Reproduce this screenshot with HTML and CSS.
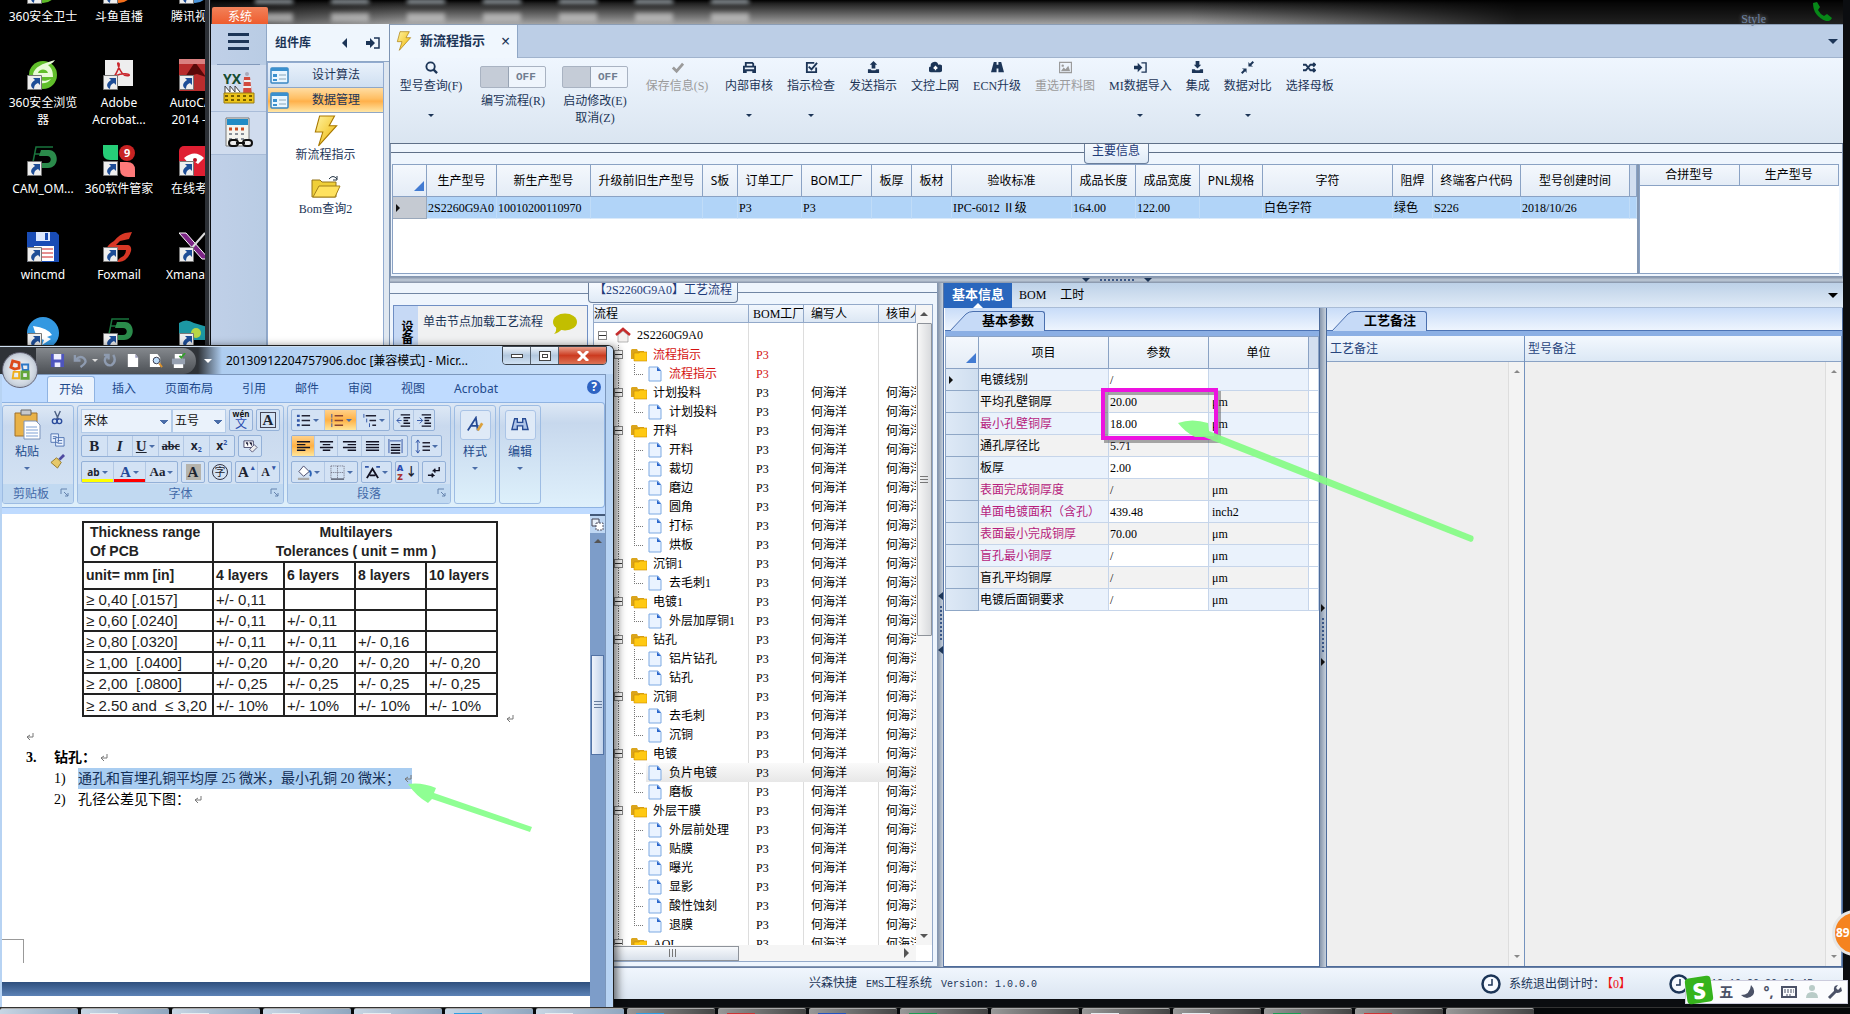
FILE: index.html
```html
<!DOCTYPE html>
<html lang="zh-CN">
<head>
<meta charset="utf-8">
<title>EMS工程系统</title>
<link rel="stylesheet" href="styles.css">
</head>
<body>
<svg class="defs" aria-hidden="true">
  <defs>
    <linearGradient id="gold" x1="0" y1="0" x2="1" y2="1"><stop offset="0" stop-color="#fff3a0"/><stop offset="1" stop-color="#eeb400"/></linearGradient>
    <symbol id="i-shortcut" viewBox="0 0 15 15"><path fill="#eee" stroke="#777" d="M.5.5h14v14H.5z"/><path fill="#1e4d96" d="M6 3h7v7l-2-2c-3 1-4 3-4 6-4-2-4-6 1-9z"/></symbol>
    <symbol id="i-bolt" viewBox="0 0 22 30"><path d="M5 1h14l-5 9h7L4 29l4-13H1z" fill="url(#gold)" stroke="#a87800"/></symbol>
    <symbol id="i-folder" viewBox="0 0 16 14"><path d="M0 2 1 1h5l1 2h6v8H0z" fill="#dba51c"/><path d="M3 5h5l1-1h7v9H3z" fill="#ffc913" stroke="#c98900" stroke-width=".6"/></symbol>
    <symbol id="i-file" viewBox="0 0 14 16"><path d="M1 1h9l3 4v10H1z" fill="#eaf3ff" stroke="#7da9e2"/><path d="M9 1l4 4H9z" fill="#2d68cc"/></symbol>
    <symbol id="i-house" viewBox="0 0 16 16"><path d="M3 8v7h10V8L8 4z" fill="#f3f1f0" stroke="#999" stroke-width=".7"/><path d="M1 8l7-6 7 6" fill="none" stroke="#c52c2c" stroke-width="2.5"/></symbol>
    <symbol id="i-form" viewBox="0 0 19 17"><rect x="1" y="1" width="17" height="15" rx="1" fill="#e9f6ff" stroke="#3a86c2" stroke-width="1.5"/><path fill="#3a90cf" d="M1 1h17v3H1zM3 7h4v3H3zM3 12h4v2H3z"/><path d="M9 8h7M9 12h7" stroke="#8aa6b8"/></symbol>
    <symbol id="i-exit" viewBox="0 0 14 12"><path fill="#1c3557" d="M0 4h4V1l5 5-5 5V8H0z"/><path fill="none" stroke="#1c3557" stroke-width="1.5" d="M8 1h5v10H8"/></symbol>
    <symbol id="i-clock" viewBox="0 0 20 20"><circle cx="10" cy="10" r="8.500" fill="#f6faff" stroke="#1c3557" stroke-width="2.500"/><path d="M11 5v6H7" fill="none" stroke="#1c3557" stroke-width="1.500"/></symbol>
    <symbol id="i-launch" viewBox="0 0 9 9"><path d="M1 6V1h6M4 4l4 4M8 5v3H5" fill="none" stroke="#6583ae"/></symbol>
    <symbol id="i-ret" viewBox="0 0 8 8"><path d="M7 0v4H1M4 2 1 4l3 3" fill="none" stroke="#777"/></symbol>
  </defs>
</svg>
<main class="screen">
 <section class="workspace">
  <ul class="icons">
   <li><svg viewBox="0 0 32 32"><circle cx="16" cy="16" r="14" fill="#5db828"/><use href="#i-shortcut" x="0" y="16" width="15" height="15"/></svg>360安全卫士</li>
   <li><svg viewBox="0 0 32 32"><circle cx="16" cy="16" r="14" fill="#f56f1b"/><use href="#i-shortcut" x="0" y="16" width="15" height="15"/></svg>斗鱼直播</li>
   <li><svg viewBox="0 0 32 32"><circle cx="16" cy="16" r="14" fill="#4a94d8"/><use href="#i-shortcut" x="0" y="16" width="15" height="15"/></svg>腾讯视频</li>
   <li><svg viewBox="0 0 32 32"><circle cx="16" cy="16" r="14" fill="#61bf2b"/><path d="M6 15c2-7 8-10 22-14-2 3-4 4-7 5 4 3 5 7 5 12H10c2 4 8 5 14 2-4 6-16 7-18-5z" fill="#e9fbd8"/><path d="M11 14c1-4 8-5 10 0z" fill="#61bf2b"/><use href="#i-shortcut" x="0" y="16" width="15" height="15"/></svg>360安全浏览器</li>
   <li><svg viewBox="0 0 32 32"><path fill="#eee" d="M2 1h28v26H2z"/><path d="M15 4c4 0-3 15-7 16-4 0 8-6 16-5 6 1-1 4-5-1-3-4-5-10-4-10z" fill="none" stroke="#c9252b" stroke-width="1.500"/><use href="#i-shortcut" x="0" y="16" width="15" height="15"/></svg>Adobe Acrobat...</li>
   <li><svg viewBox="0 0 32 32"><path fill="#b92d2d" d="M0 0h32v32H0z"/><path d="M16 3l11 15-9-3-12 3z" fill="#590909"/><path d="M0 0h32v5H0z" fill="#da8080"/><use href="#i-shortcut" x="0" y="16" width="15" height="15"/></svg>AutoCAD 2014 - ...</li>
   <li><svg viewBox="0 0 32 32"><path d="M6 17 9 2h17M7 9h9" stroke="#19733c" stroke-width="1.500" fill="none"/><path d="M14 5h8c10 0 11 18-1 18h-9v-5h8c5 0 5-7 0-7h-8z" fill="#2b8b4b"/><use href="#i-shortcut" x="0" y="16" width="15" height="15"/></svg>CAM_OM...</li>
   <li><svg viewBox="0 0 32 32"><path fill="#26ce78" d="M0 0h15v15H7q-7 0-7-7z"/><path fill="#ff7a7a" d="M17 17h7q8 0 8 8v7h-7q-8 0-8-8z"/><circle cx="24" cy="8" r="8" fill="#c82323"/><text x="21" y="12" font-size="11" font-weight="700" fill="#fff">9</text><use href="#i-shortcut" x="0" y="16" width="15" height="15"/></svg>360软件管家</li>
   <li><svg viewBox="0 0 32 32"><rect y="1" width="32" height="30" rx="5" fill="#df1f32"/><path d="M5 13q11-9 20 0l-6 6q-5-5-9 0z" fill="#fff"/><circle cx="16" cy="15" r="2" fill="#b01020"/><use href="#i-shortcut" x="0" y="16" width="15" height="15"/></svg>在线考试</li>
   <li><svg viewBox="0 0 32 32"><path d="M0 1h29l3 3v27H0z" fill="#194cb5"/><path fill="#dbe7ff" d="M9 1h14v9H9z"/><path fill="#194cb5" d="M18 2h3v7h-3z"/><path fill="#fff" d="M7 15h20v15H7z"/><path stroke="#ce2020" d="M9 18h17M9 22h17M9 26h17"/><use href="#i-shortcut" x="0" y="16" width="15" height="15"/></svg>wincmd</li>
   <li><svg viewBox="0 0 32 32"><path d="M29 1 26 8l-9 2-4 4h12q4 1 3 6-3 10-12 11h-3l4-4q6-2 6-8H3q1-5 8-9 6-7 11-8z" fill="#d73725"/><use href="#i-shortcut" x="0" y="16" width="15" height="15"/></svg>Foxmail</li>
   <li><svg viewBox="0 0 32 32"><path d="M0 2h7l23 26h-7z" fill="#7c2585" stroke="#fff"/><path d="M26 2 4 27" stroke="#ddd" stroke-width="2"/><use href="#i-shortcut" x="0" y="16" width="15" height="15"/></svg>Xmanager</li>
   <li><svg viewBox="0 0 32 32"><circle cx="16" cy="16" r="16" fill="#3398e1"/><path d="M6 9q15 2 19 9l-5 2 4 2-9 6 2-5-5-2q-3-2-4-6z" fill="#fff"/><use href="#i-shortcut" x="0" y="16" width="15" height="15"/></svg></li>
   <li><svg viewBox="0 0 32 32"><path d="M6 17 9 2h17M7 9h9" stroke="#19733c" stroke-width="1.500" fill="none"/><path d="M14 5h8c10 0 11 18-1 18h-9v-5h8c5 0 5-7 0-7h-8z" fill="#2b8b4b"/><use href="#i-shortcut" x="0" y="16" width="15" height="15"/></svg></li>
   <li><svg viewBox="0 0 32 32"><path d="M0 6q7-5 15 0l17 5v12H0z" fill="#1c97a3"/><circle cx="17" cy="16" r="5" fill="#b9d646"/><use href="#i-shortcut" x="0" y="16" width="15" height="15"/></svg></li>
  </ul>

  <section class="ems">
   <header class="titlebar">
    <div class="ghosts"><i></i><i></i><i></i><i></i><i></i><i></i><i></i></div>
    <button class="systab">系统</button>
    <span class="style-menu">Style</span>
    <svg class="phone" viewBox="0 0 20 19"><path d="M1 1 5 0l3 5-2 3q2 4 6 6l3-2 5 4q-2 4-6 3Q1 14 1 1z" fill="#078718"/></svg>
   </header>
   <div class="body">
    <nav class="rail">
     <button class="burger" aria-label="菜单"><i></i><i></i><i></i></button>
     <button class="railbtn" aria-label="YX"><svg width="32" height="32" viewBox="0 0 32 32"><text x="0" y="12" font-size="14" font-weight="700" fill="#174d31">YX</text><path fill="#d24a3e" d="M21 5h6l2 18h-9z"/><path d="M21 9h7M20 15h8" stroke="#eee" stroke-width="2"/><circle cx="24" cy="2" r="2" fill="#aab"/><path d="M2 21v-7l5 6v-6l5 6v-6l5 6" fill="#fff" stroke="#444"/><path fill="#edc519" stroke="#997a10" d="M1 21h30v10H1z"/><path stroke="#775e00" stroke-dasharray="3 3" stroke-width="2" d="M2 24h29M2 28h29"/></svg></button>
     <button class="railbtn" aria-label="日历"><svg width="30" height="32" viewBox="0 0 30 32"><path fill="#f4f4ee" stroke="#777" d="M2 1h23v28H2z"/><path fill="#218bc5" d="M3 2h21v6H3z"/><path stroke="#c94d22" stroke-dasharray="3 3" stroke-width="3" d="M5 12h18"/><path stroke="#8b9199" stroke-dasharray="3 3" stroke-width="2" d="M5 17h18M5 22h18"/><g fill="#eee" stroke="#111" stroke-width="2"><rect x="5" y="23" width="9" height="6" rx="3"/><rect x="19" y="23" width="9" height="6" rx="3"/><path d="M12 26h9"/></g></svg></button>
    </nav>
    <aside class="library">
     <header><b>组件库</b><span class="tri left"></span><svg width="14" height="12"><use href="#i-exit"/></svg></header>
     <div class="library-list">
      <button class="acc"><svg width="19" height="17"><use href="#i-form"/></svg><span>设计算法</span></button>
      <button class="acc on"><svg width="19" height="17"><use href="#i-form"/></svg><span>数据管理</span></button>
      <a class="tile" href="#"><svg width="24" height="32"><use href="#i-bolt"/></svg>新流程指示</a>
      <a class="tile" href="#"><svg width="30" height="26" viewBox="0 0 30 26"><path d="M1 6h8l2 2h14v15H1z" fill="#efcf39" stroke="#94741b"/><path d="M8 12h21l-5 11H2z" fill="#ffe25f" stroke="#a38019"/><path d="M18 5q4-5 8 0m0-3v4h-4" fill="none" stroke="#234"/></svg>Bom查询2</a>
     </div>
    </aside>

    <section class="document">
     <div class="doctabs"><button class="doctab"><svg width="16" height="20"><use href="#i-bolt"/></svg><b>新流程指示</b><span>×</span></button><span class="tri"></span></div>
     <div class="toolbar">
      <button class="tool wide"><svg viewBox="0 0 14 14"><circle cx="6" cy="6" r="4.500" fill="none" stroke="currentColor" stroke-width="2"/><path d="m9 9 4 4" stroke="currentColor" stroke-width="2.500"/></svg><span>型号查询(F)</span><i></i></button>
      <label class="tool wide switch"><input type="checkbox"><em>OFF</em><span>编写流程(R)</span></label>
      <label class="tool wide switch"><input type="checkbox"><em>OFF</em><span>启动修改(E)<br>取消(Z)</span></label>
      <button class="tool wide off"><svg viewBox="0 0 14 14"><path d="m2 7 4 4 7-8" fill="none" stroke="currentColor" stroke-width="3"/></svg><span>保存信息(S)</span></button>
      <button class="tool"><svg viewBox="0 0 14 14"><path d="M3 6V2h7l1 1v3M1 6h12v6h-2v-2H3v2H1z" fill="none" stroke="currentColor" stroke-width="2"/></svg><span>内部审核</span><i></i></button>
      <button class="tool"><svg viewBox="0 0 14 14"><path d="M12 7v5H2V2h8M4 6l3 3 6-7" fill="none" stroke="currentColor" stroke-width="2"/></svg><span>指示检查</span><i></i></button>
      <button class="tool"><svg viewBox="0 0 14 14"><path d="M7 0l4 4H9v4H5V4H3zM1 9h3l1 1h4l1-1h3v4H1z" fill="currentColor"/></svg><span>发送指示</span></button>
      <button class="tool"><svg viewBox="0 0 14 14"><path d="M3 12a3 3 0 0 1-1-6 4 4 0 0 1 8-2 4 4 0 0 1 2 8z" fill="currentColor"/><path d="M7 10V6M5 8l2-2 2 2" fill="none" stroke="#fff" stroke-width="1.500"/></svg><span>文控上网</span></button>
      <button class="tool"><svg viewBox="0 0 14 14"><path d="M3 1h3v3h2V1h3l3 11H8V8H6v4H0z" fill="currentColor"/></svg><span>ECN升级</span></button>
      <button class="tool off"><svg viewBox="0 0 14 14"><path d="M.5 1.500h13v11H.5z" fill="none" stroke="currentColor" stroke-width="1.500"/><path d="m2 11 3-4 2 2 3-4 2 6z" fill="currentColor"/><circle cx="4" cy="5" r="1.300" fill="currentColor"/></svg><span>重选开料图</span></button>
      <button class="tool"><svg viewBox="0 0 14 12"><use href="#i-exit"/></svg><span>MI数据导入</span><i></i></button>
      <button class="tool"><svg viewBox="0 0 14 14"><path d="M5 0h4v4h2L7 8 3 4h2zM1 9h3l1 1h4l1-1h3v4H1z" fill="currentColor"/></svg><span>集成</span><i></i></button>
      <button class="tool"><svg viewBox="0 0 14 14"><path d="M8 1v5h5l-2-1.500 3-3L12.500 0l-3 3zM6 13V8H1l2 1.500-3 3L1.500 14l3-3z" fill="currentColor"/></svg><span>数据对比</span><i></i></button>
      <button class="tool"><svg viewBox="0 0 14 14"><path d="M0 4h3l5 6h5M0 10h3l5-6h5M11 2l2 2-2 2M11 8l2 2-2 2" fill="none" stroke="currentColor" stroke-width="2"/></svg><span>选择母板</span></button>
     </div>
     <section class="maininfo">
      <h2 class="pill">主要信息</h2>
      <div class="maingrid">
       <div class="gridbox">
       <table class="grid g1">
        <colgroup><col class="w34"><col class="w70"><col class="w94"><col class="w112"><col class="w35"><col class="w64"><col class="w70"><col class="w40"><col class="w40"><col class="w120"><col class="w64"><col class="w64"><col class="w63"><col class="w130"><col class="w40"><col class="w88"><col class="w109"><col></colgroup>
        <thead><tr><th class="corner"></th><th>生产型号</th><th>新生产型号</th><th>升级前旧生产型号</th><th>S板</th><th>订单工厂</th><th>BOM工厂</th><th>板厚</th><th>板材</th><th>验收标准</th><th>成品长度</th><th>成品宽度</th><th>PNL规格</th><th>字符</th><th>阻焊</th><th>终端客户代码</th><th>型号创建时间</th><th class="tail"></th></tr></thead>
        <tbody><tr><td class="mark"><span class="tri right"></span></td><td>2S2260G9A0</td><td>10010200110970</td><td></td><td></td><td>P3</td><td>P3</td><td></td><td></td><td>IPC-6012 Ⅱ级</td><td>164.00</td><td>122.00</td><td></td><td>白色字符</td><td>绿色</td><td>S226</td><td>2018/10/26</td><td></td></tr></tbody>
       </table>
       </div>
       <div class="gridbox side"><table class="grid g2"><thead><tr><th>合拼型号</th><th>生产型号</th></tr></thead></table></div>
      </div>
     </section>
     <div class="hsplit"><span class="tri"></span><u></u><span class="tri"></span></div>
     <div class="lower">
      <section class="hintpane"><div class="hintbox"><b class="vtab">设备</b><p>单击节点加载工艺流程</p><svg width="26" height="22" viewBox="0 0 26 22"><ellipse cx="13" cy="9" rx="12" ry="8.500" fill="#c2be00"/><path d="M4 13q1 5-2 8 5-1 9-6z" fill="#c2be00"/></svg></div></section>
      <section class="treepane">
       <h2 class="pill">【2S2260G9A0】工艺流程</h2>
       <div class="treebox">
        <div class="treeview">
        <table class="tree">
         <colgroup><col class="c1"><col class="c2"><col class="c3"><col></colgroup>
         <thead><tr><th>流程</th><th>BOM工厂</th><th>编写人</th><th>核审人</th></tr></thead>
         <tbody>
          <tr class="root"><td><div><i class="tog"></i><svg><use href="#i-house"/></svg>2S2260G9A0</div></td><td></td><td></td><td></td></tr>
          <tr class="l1 red"><td><div><i class="tog"></i><svg><use href="#i-folder"/></svg>流程指示</div></td><td>P3</td><td></td><td></td></tr>
          <tr class="l2 last red"><td><div><i class="twig"></i><svg><use href="#i-file"/></svg>流程指示</div></td><td>P3</td><td></td><td></td></tr>
          <tr class="l1"><td><div><i class="tog"></i><svg><use href="#i-folder"/></svg>计划投料</div></td><td>P3</td><td>何海洋</td><td>何海洋</td></tr>
          <tr class="l2 last"><td><div><i class="twig"></i><svg><use href="#i-file"/></svg>计划投料</div></td><td>P3</td><td>何海洋</td><td>何海洋</td></tr>
          <tr class="l1"><td><div><i class="tog"></i><svg><use href="#i-folder"/></svg>开料</div></td><td>P3</td><td>何海洋</td><td>何海洋</td></tr>
          <tr class="l2"><td><div><i class="twig"></i><svg><use href="#i-file"/></svg>开料</div></td><td>P3</td><td>何海洋</td><td>何海洋</td></tr>
          <tr class="l2"><td><div><i class="twig"></i><svg><use href="#i-file"/></svg>裁切</div></td><td>P3</td><td>何海洋</td><td>何海洋</td></tr>
          <tr class="l2"><td><div><i class="twig"></i><svg><use href="#i-file"/></svg>磨边</div></td><td>P3</td><td>何海洋</td><td>何海洋</td></tr>
          <tr class="l2"><td><div><i class="twig"></i><svg><use href="#i-file"/></svg>圆角</div></td><td>P3</td><td>何海洋</td><td>何海洋</td></tr>
          <tr class="l2"><td><div><i class="twig"></i><svg><use href="#i-file"/></svg>打标</div></td><td>P3</td><td>何海洋</td><td>何海洋</td></tr>
          <tr class="l2 last"><td><div><i class="twig"></i><svg><use href="#i-file"/></svg>烘板</div></td><td>P3</td><td>何海洋</td><td>何海洋</td></tr>
          <tr class="l1"><td><div><i class="tog"></i><svg><use href="#i-folder"/></svg>沉铜1</div></td><td>P3</td><td>何海洋</td><td>何海洋</td></tr>
          <tr class="l2 last"><td><div><i class="twig"></i><svg><use href="#i-file"/></svg>去毛刺1</div></td><td>P3</td><td>何海洋</td><td>何海洋</td></tr>
          <tr class="l1"><td><div><i class="tog"></i><svg><use href="#i-folder"/></svg>电镀1</div></td><td>P3</td><td>何海洋</td><td>何海洋</td></tr>
          <tr class="l2 last"><td><div><i class="twig"></i><svg><use href="#i-file"/></svg>外层加厚铜1</div></td><td>P3</td><td>何海洋</td><td>何海洋</td></tr>
          <tr class="l1"><td><div><i class="tog"></i><svg><use href="#i-folder"/></svg>钻孔</div></td><td>P3</td><td>何海洋</td><td>何海洋</td></tr>
          <tr class="l2"><td><div><i class="twig"></i><svg><use href="#i-file"/></svg>铝片钻孔</div></td><td>P3</td><td>何海洋</td><td>何海洋</td></tr>
          <tr class="l2 last"><td><div><i class="twig"></i><svg><use href="#i-file"/></svg>钻孔</div></td><td>P3</td><td>何海洋</td><td>何海洋</td></tr>
          <tr class="l1"><td><div><i class="tog"></i><svg><use href="#i-folder"/></svg>沉铜</div></td><td>P3</td><td>何海洋</td><td>何海洋</td></tr>
          <tr class="l2"><td><div><i class="twig"></i><svg><use href="#i-file"/></svg>去毛刺</div></td><td>P3</td><td>何海洋</td><td>何海洋</td></tr>
          <tr class="l2 last"><td><div><i class="twig"></i><svg><use href="#i-file"/></svg>沉铜</div></td><td>P3</td><td>何海洋</td><td>何海洋</td></tr>
          <tr class="l1"><td><div><i class="tog"></i><svg><use href="#i-folder"/></svg>电镀</div></td><td>P3</td><td>何海洋</td><td>何海洋</td></tr>
          <tr class="l2 sel"><td><div><i class="twig"></i><svg><use href="#i-file"/></svg>负片电镀</div></td><td>P3</td><td>何海洋</td><td>何海洋</td></tr>
          <tr class="l2 last"><td><div><i class="twig"></i><svg><use href="#i-file"/></svg>磨板</div></td><td>P3</td><td>何海洋</td><td>何海洋</td></tr>
          <tr class="l1"><td><div><i class="tog"></i><svg><use href="#i-folder"/></svg>外层干膜</div></td><td>P3</td><td>何海洋</td><td>何海洋</td></tr>
          <tr class="l2"><td><div><i class="twig"></i><svg><use href="#i-file"/></svg>外层前处理</div></td><td>P3</td><td>何海洋</td><td>何海洋</td></tr>
          <tr class="l2"><td><div><i class="twig"></i><svg><use href="#i-file"/></svg>贴膜</div></td><td>P3</td><td>何海洋</td><td>何海洋</td></tr>
          <tr class="l2"><td><div><i class="twig"></i><svg><use href="#i-file"/></svg>曝光</div></td><td>P3</td><td>何海洋</td><td>何海洋</td></tr>
          <tr class="l2"><td><div><i class="twig"></i><svg><use href="#i-file"/></svg>显影</div></td><td>P3</td><td>何海洋</td><td>何海洋</td></tr>
          <tr class="l2"><td><div><i class="twig"></i><svg><use href="#i-file"/></svg>酸性蚀刻</div></td><td>P3</td><td>何海洋</td><td>何海洋</td></tr>
          <tr class="l2 last"><td><div><i class="twig"></i><svg><use href="#i-file"/></svg>退膜</div></td><td>P3</td><td>何海洋</td><td>何海洋</td></tr>
          <tr class="l1"><td><div><i class="tog"></i><svg><use href="#i-folder"/></svg>AOI</div></td><td>P3</td><td>何海洋</td><td>何海洋</td></tr>
         </tbody>
        </table>
        </div>
        <div class="vscroll"><span class="tri up"></span><i class="thumb"></i><span class="tri"></span></div>
        <div class="hscroll"><i class="thumb"></i><span class="tri right"></span></div>
       </div>
      </section>
      <div class="vsplit"><span class="tri left"></span><u></u><span class="tri left"></span></div>
      <section class="params">
       <div class="tabs"><button class="on">基本信息</button><button>BOM</button><button>工时</button><span class="tri"></span></div>
       <div class="panes">
        <div class="pane p1">
         <div class="subtab"><svg viewBox="0 0 32 20" preserveAspectRatio="none"><path d="M0 20 16 3q3-2.500 7-2.500h9V20z" fill="#c6daf7"/><path d="M0 20 16 3q3-2.500 7-2.500h9" fill="none" stroke="#4a6fae"/></svg><b>基本参数</b></div>
         <table class="grid g3">
          <colgroup><col class="w33"><col class="w130"><col class="w100"><col class="w100"><col></colgroup>
          <thead><tr><th class="corner"></th><th>项目</th><th>参数</th><th>单位</th><th class="tail"></th></tr></thead>
          <tbody>
          <tr><td><span class="tri right"></span></td><td>电镀线别</td><td>/</td><td></td><td></td></tr>
          <tr><td></td><td>平均孔壁铜厚</td><td>20.00</td><td>μm</td><td></td></tr>
          <tr class="key"><td></td><td>最小孔壁铜厚</td><td>18.00</td><td>μm</td><td></td></tr>
          <tr><td></td><td>通孔厚径比</td><td>5.71</td><td></td><td></td></tr>
          <tr><td></td><td>板厚</td><td>2.00</td><td></td><td></td></tr>
          <tr class="key"><td></td><td>表面完成铜厚度</td><td>/</td><td>μm</td><td></td></tr>
          <tr class="key"><td></td><td>单面电镀面积（含孔）</td><td>439.48</td><td>inch2</td><td></td></tr>
          <tr class="key"><td></td><td>表面最小完成铜厚</td><td>70.00</td><td>μm</td><td></td></tr>
          <tr class="key"><td></td><td>盲孔最小铜厚</td><td>/</td><td>μm</td><td></td></tr>
          <tr><td></td><td>盲孔平均铜厚</td><td>/</td><td>μm</td><td></td></tr>
          <tr><td></td><td>电镀后面铜要求</td><td>/</td><td>μm</td><td></td></tr>
          </tbody>
         </table>
        </div>
        <div class="vsplit thin"><span class="tri right"></span><u></u><span class="tri right"></span></div>
        <div class="pane p2">
         <div class="subtab"><svg viewBox="0 0 32 20" preserveAspectRatio="none"><path d="M0 20 16 3q3-2.500 7-2.500h9V20z" fill="#c6daf7"/><path d="M0 20 16 3q3-2.500 7-2.500h9" fill="none" stroke="#4a6fae"/></svg><b>工艺备注</b></div>
         <div class="notes">
          <div><h3>工艺备注</h3><div class="notebody"><span class="tri up"></span><span class="tri"></span></div></div>
          <div><h3>型号备注</h3><div class="notebody"><span class="tri up"></span><span class="tri"></span></div></div>
         </div>
        </div>
       </div>
      </section>
     </div>
    </section>
   </div>
   <footer class="status"><span class="ver">兴森快捷 <span class="mono">&nbsp;EMS</span>工程系统 <span class="mono">&nbsp;Version: 1.0.0.0</span></span><span class="count"><svg width="20" height="20"><use href="#i-clock"/></svg>系统退出倒计时：<em>【0】</em></span><span class="now"><svg width="20" height="20"><use href="#i-clock"/></svg><span class="mono">2018-10-29 20:20:45</span></span></footer>
  </section>

  <section class="word">
   <header class="wtitle">
    <button class="orb" aria-label="Office"><svg viewBox="0 0 24 24" fill="none" stroke-width="3"><path d="M11 4 4 2 2 9l4 2 5-1z" stroke="#dc4a1a"/><path d="M14 6h7v6h-6z" stroke="#2e78c6" stroke-width="2"/><path d="M5 14h6v7H4z" stroke="#efaf1d" stroke-width="2"/><path d="M14 14h7v7h-7z" stroke="#64a63a"/></svg></button>
    <div class="qat">
     <svg viewBox="0 0 16 16"><path d="M1 1h14v14H1z" fill="#4e55bd"/><path d="M4 1h8v6H4zM5 10h6v5H5z" fill="#eef"/></svg>
     <svg viewBox="0 0 16 16"><path d="M2 2v6h6M3 7q5-5 9-1t-4 9" fill="none" stroke="#8e9bb0" stroke-width="2.500"/></svg>
     <span class="tri"></span>
     <svg viewBox="0 0 16 16"><path d="M12 2q4 7-2 11-6 1-7-5 0-3 3-5m-4-1h5v5" fill="none" stroke="#8e9bb0" stroke-width="2.500"/></svg>
     <svg viewBox="0 0 16 16"><path d="M3 1h8l3 4v10H3z" fill="#fff"/><path d="M11 1v4h3z" fill="#99b"/></svg>
     <svg viewBox="0 0 16 16"><path d="M2 1h8l3 4v10H2z" fill="#fff"/><circle cx="9" cy="8" r="3.500" fill="#bcdcfa" stroke="#334"/><path d="m12 11 3 4" stroke="#dc922b" stroke-width="2"/></svg>
     <svg viewBox="0 0 16 16"><path fill="#fff" d="M4 1h8v5H4zM3 11h10v5H3z"/><path fill="#97a1b1" d="M1 6h14v6H1z"/><path d="m9 3 2 2 4-5" fill="none" stroke="#35a02c" stroke-width="2"/></svg>
    </div>
    <span class="tri qmore"></span>
    <h1>20130912204757906.doc [兼容模式] - Micr...</h1>
    <div class="winbtns"><button aria-label="最小化"><i class="min"></i></button><button aria-label="最大化"><i class="max"></i></button><button class="close" aria-label="关闭"><svg width="12" height="10" viewBox="0 0 12 10"><path d="m1 0 10 10M11 0 1 10" stroke="#fff" stroke-width="3"/></svg></button></div>
   </header>
   <div class="wbody">
    <nav class="wtabs"><button class="on">开始</button><button>插入</button><button>页面布局</button><button>引用</button><button>邮件</button><button>审阅</button><button>视图</button><button>Acrobat</button><span class="help">?</span></nav>
    <div class="ribbon">
     <section class="grp clip"><div class="grpbody"><button class="paste"><svg width="27" height="31" viewBox="0 0 27 31"><path fill="#e9b248" stroke="#a17028" d="M1 4h22v23H1z"/><path fill="#c7c9cc" stroke="#666" d="M7 1h10v5H7z"/><path fill="#fff" stroke="#7d94bb" d="M10 12h12l4 4v14H10z"/><path stroke="#7ea1d5" d="M12 18h11M12 21h12M12 24h12M12 27h12"/></svg>粘贴<span class="tri"></span></button><div class="minis">
      <svg viewBox="0 0 16 16"><path d="m5 1 4 9M11 1 7 10" stroke="#4d6185" stroke-width="1.500"/><circle cx="5" cy="12" r="2.500" fill="none" stroke="#2b4c9c" stroke-width="1.500"/><circle cx="10" cy="12" r="2.500" fill="none" stroke="#2b4c9c" stroke-width="1.500"/></svg>
      <svg viewBox="0 0 16 16" fill="#e9f2ff" stroke="#4e71b0"><path d="M1 2h8v9H1zM6 6h9v9H6z"/><path d="M3 5h4M3 7h3M8 9h5M8 12h5"/></svg>
      <svg viewBox="0 0 16 16"><path d="m15 1-5 5" stroke="#4e4aa0" stroke-width="3"/><path d="m7 4 5 5-4 6-7-6z" fill="#e6c869" stroke="#947a2c"/></svg></div></div><h4>剪贴板<svg width="9" height="9"><use href="#i-launch"/></svg></h4></section>
     <section class="grp font"><div class="grpbody rows">
      <div class="row"><select class="family" aria-label="字体"><option>宋体</option></select><select class="size" aria-label="字号"><option>五号</option></select><button class="rb lone ruby"><small>wén</small>文</button><button class="rb lone serif"><span class="boxed">A</span></button></div>
      <div class="row"><span class="bar f2"><button class="rb serif">B</button><button class="rb serif it">I</button><button class="rb serif ul">U<span class="tri"></span></button><button class="rb serif st">abc</button><button class="rb script">x<sub>2</sub></button><button class="rb script">x<sup>2</sup></button></span><button class="rb lone"><svg viewBox="0 0 16 16"><path d="M1 2h10v7H1z" fill="#fff" stroke="#446"/><path d="m7 11 5-5 3 3-5 5z" fill="#eee" stroke="#557"/><path d="M3 4h2v3M7 4h2v3" stroke="#224"/></svg></button></div>
      <div class="row"><span class="bar f3"><button class="rb hl">ab<span class="tri"></span></button><button class="rb serif fc">A<span class="tri"></span></button><button class="rb serif aa">Aa<span class="tri"></span></button></span><button class="rb lone serif"><span class="shade">A</span></button><button class="rb lone"><span class="ring">字</span></button><span class="bar grow"><button class="rb serif">A<sup>▴</sup></button><button class="rb serif sm">A<sup>▾</sup></button></span></div>
     </div><h4>字体<svg width="9" height="9"><use href="#i-launch"/></svg></h4></section>
     <section class="grp para"><div class="grpbody rows">
      <div class="row"><span class="bar p3"><button class="rb"><svg viewBox="0 0 16 16"><path stroke="#223" stroke-width="1.500" d="M6 3h9M6 8h9M6 13h9"/><path stroke="#3154a5" stroke-width="2.500" d="M1 3h3M1 8h3M1 13h3"/></svg><span class="tri"></span></button><button class="rb hot"><svg viewBox="0 0 16 16"><path stroke="#843" stroke-width="1.500" d="M6 3h9M6 8h9M6 13h9"/><path stroke="#3154a5" d="M3 1v4M3 6v4M3 11v4"/></svg><span class="tri"></span></button><button class="rb"><svg viewBox="0 0 16 16"><path stroke="#223" stroke-width="1.500" d="M4 3h11M8 8h7M11 13h4"/><path stroke="#3154a5" d="M2 1v4M5 6v4M8 11v4"/></svg><span class="tri"></span></button></span><span class="bar"><button class="rb"><svg viewBox="0 0 16 16"><path stroke="#112" stroke-width="1.500" d="M5 2h10M8 5h7M8 8h5M8 11h7M5 14h10"/><path d="M6 8H1l3-3M1 8l3 3" fill="none" stroke="#3154a5"/></svg></button><button class="rb"><svg viewBox="0 0 16 16"><path stroke="#112" stroke-width="1.500" d="M5 2h10M8 5h7M8 8h5M8 11h7M5 14h10"/><path d="M0 8h6L3 5m3 3-3 3" fill="none" stroke="#3154a5"/></svg></button></span></div>
      <div class="row"><span class="bar p5"><button class="rb hot"><svg viewBox="0 0 16 16"><path stroke="#112" stroke-width="1.500" d="M1 3h14M1 6h9M1 9h14M1 12h9"/></svg></button><button class="rb"><svg viewBox="0 0 16 16"><path stroke="#112" stroke-width="1.500" d="M1 3h14M4 6h8M1 9h14M4 12h8"/></svg></button><button class="rb"><svg viewBox="0 0 16 16"><path stroke="#112" stroke-width="1.500" d="M1 3h14M6 6h9M1 9h14M6 12h9"/></svg></button><button class="rb"><svg viewBox="0 0 16 16"><path stroke="#112" stroke-width="1.500" d="M1 3h14M1 6h14M1 9h14M1 12h14"/></svg></button><button class="rb"><svg viewBox="0 0 16 16"><path stroke="#112" stroke-width="1.500" d="M3 6h10M3 9h10M3 12h10M3 15h10"/><path d="M1 0v15M15 0v15M2 2h12" stroke="#3154a5"/></svg></button></span><button class="rb lone w32"><svg viewBox="0 0 16 16"><path stroke="#223" stroke-width="1.500" d="M8 4h8M8 8h8M8 12h8"/><path d="M3 1v14M1 4l2-3 2 3M1 12l2 3 2-3" fill="none" stroke="#3154a5"/></svg><span class="tri"></span></button></div>
      <div class="row"><span class="bar p2b"><button class="rb"><svg viewBox="0 0 16 16"><path d="m7 1 6 6-6 5-5-5z" fill="#fff" stroke="#446"/><path d="M13 6q3 2 1 6" stroke="#2a62b5" stroke-width="2" fill="none"/><path stroke="#aaa" stroke-width="3" d="M1 15h12"/></svg><span class="tri"></span></button><button class="rb"><svg viewBox="0 0 16 16"><path d="M1 1h14v14M1 1v14M8 1v14M1 8h14" fill="none" stroke="#667" stroke-dasharray="1 1"/><path d="M1 15h14" stroke="#112"/></svg><span class="tri"></span></button></span><button class="rb lone w32"><svg viewBox="0 0 16 16"><path d="m2 14 6-10 6 10M5 11h6" fill="none" stroke="#112" stroke-width="2"/><path d="M0 2h4M12 2h4" stroke="#3154a5" stroke-width="2"/></svg><span class="tri"></span></button><button class="rb lone sort"><b>A<br><i>Z</i></b>↓</button><button class="rb lone"><svg viewBox="0 0 16 16"><path d="M13 2v4H7l2-2M7 6l2 2M1 11h6l-2-2m2 2-2 2" fill="none" stroke="#112" stroke-width="1.500"/></svg></button></div>
     </div><h4>段落<svg width="9" height="9"><use href="#i-launch"/></svg></h4></section>
     <section class="grp tall"><button><span class="big"><svg viewBox="0 0 20 20"><path d="m2 16 9-14 2 14M5 11h9" fill="none" stroke="#274b94" stroke-width="2"/><path d="m18 8-5 8" stroke="#dba13d" stroke-width="3"/></svg></span>样式<span class="tri"></span></button></section>
     <section class="grp tall"><button><span class="big"><svg viewBox="0 0 20 20"><path d="M4 3h3v4h6V3h3l3 12h-6v-4H7v4H1z" fill="#afc5e8" stroke="#274b94" stroke-width="1.500"/></svg></span>编辑<span class="tri"></span></button></section>
    </div>
    <div class="docarea">
     <div class="pages">
      <article class="page">
       <div class="figure"><table class="pcb">
        <colgroup><col class="k"><col><col><col><col></colgroup>
        <tr class="h"><th>&nbsp;Thickness range<br>&nbsp;Of PCB</th><th colspan="4" class="mid">Multilayers<br>Tolerances ( unit = mm )</th></tr>
        <tr class="h2"><th>unit= mm [in]</th><th>4 layers</th><th>6 layers</th><th>8 layers</th><th>10 layers</th></tr>
        <tr><td>≥ 0,40 [.0157]</td><td>+/- 0,11</td><td></td><td></td><td></td></tr>
        <tr><td>≥ 0,60 [.0240]</td><td>+/- 0,11</td><td>+/- 0,11</td><td></td><td></td></tr>
        <tr><td>≥ 0,80 [.0320]</td><td>+/- 0,11</td><td>+/- 0,11</td><td>+/- 0,16</td><td></td></tr>
        <tr><td>≥ 1,00  [.0400]</td><td>+/- 0,20</td><td>+/- 0,20</td><td>+/- 0,20</td><td>+/- 0,20</td></tr>
        <tr><td>≥ 2,00  [.0800]</td><td>+/- 0,25</td><td>+/- 0,25</td><td>+/- 0,25</td><td>+/- 0,25</td></tr>
        <tr class="end"><td>≥ 2.50 and  ≤ 3,20</td><td>+/- 10%</td><td>+/- 10%</td><td>+/- 10%</td><td>+/- 10%</td></tr>
       </table><svg class="ret" width="8" height="8"><use href="#i-ret"/></svg></div>
       <p class="blank"><svg width="8" height="8"><use href="#i-ret"/></svg></p>
       <p class="sec"><span>3.</span>钻孔：<svg width="8" height="8"><use href="#i-ret"/></svg></p>
       <p class="item"><span>1)</span><mark>通孔和盲埋孔铜平均厚 25 微米，最小孔铜 20 微米；<svg width="8" height="8"><use href="#i-ret"/></svg></mark></p>
       <p class="item"><span>2)</span>孔径公差见下图：<svg width="8" height="8"><use href="#i-ret"/></svg></p>
       <i class="crop"></i>
      </article>
      <div class="pagegap"></div>
      <div class="nextpage"></div>
     </div>
     <div class="wscroll"><div class="ruler"><svg width="13" height="13" viewBox="0 0 13 13"><path d="M1 1h7v7H1z" fill="#e9f1fb" stroke="#445"/><path d="M5 5h7v7H5z" fill="#fff" stroke="#556" stroke-dasharray="2 1"/></svg></div><div class="track"><span class="tri up"></span><i class="thumb"></i></div></div>
    </div>
   </div>
  </section>

  <svg class="marks" width="1480" height="850" aria-hidden="true">
   <rect x="1106" y="393" width="113" height="48" fill="none" stroke="#555" stroke-opacity=".5" stroke-width="4"/>
   <rect x="1103" y="390" width="113" height="48" fill="none" stroke="#ed12e0" stroke-width="4"/>
   <path d="M408 784q14-2 28 4l-2 5 98 34-2 5-98-33-4 4q-12-7-20-19z" fill="#8fff93"/>
   <path d="M1178 423q14-5 30 0l1 8 264 105q2 4-2 6l-267-105-9 0q-10-5-17-14z" fill="#84fc84" fill-opacity=".92"/>
  </svg>
  <div class="ball">89</div>
  <div class="ime"><b class="sogou">S</b><span>五</span>
   <svg viewBox="0 0 16 16"><path d="M11 1q-1 10-10 10 6 6 12 0 3-5-2-10z" fill="#4b5267"/></svg>
   <span>°,</span>
   <svg viewBox="0 0 16 16"><path d="M1 3h14v10H1z" fill="none" stroke="#4b5267" stroke-width="2"/><path d="M3 6h10M3 8h10M5 11h6" stroke="#4b5267" stroke-dasharray="2 1"/></svg>
   <svg viewBox="0 0 16 16"><circle cx="8" cy="4" r="3" fill="#b9ccc8"/><path d="M2 14q0-6 6-6t6 6z" fill="#b9ccc8"/></svg>
   <svg viewBox="0 0 16 16"><path d="m2 14 7-7" stroke="#4b5267" stroke-width="3"/><path d="M14 3l-3 3-2-2 2-3q-5 0-4 6 3 4 8 0z" fill="#4b5267"/></svg></div>
 </section>
 <footer class="taskbar"><i class="lt"></i><i class="lt g"></i><i class="lt g"></i><i class="lt g"></i><i class="lt g"></i><i class="lt c"></i><i class="lt g"></i><i class="c"></i><i class="r"></i><i class="b"></i><i class="gr"></i><i></i><i class="g"></i><i class="g"></i><i class="gr"></i><i class="r"></i><i></i></footer>
</main>
</body>
</html>
```
FILE: styles.css
```css
*{box-sizing:border-box}
body{margin:0;background:#000;overflow:hidden;font:12px/16px "Liberation Serif","Noto Sans CJK SC",serif;color:#000}
button,select{font:inherit;color:inherit;background:none;border:0;padding:0;margin:0}
h1,h2,h3,h4,p,ul{margin:0;padding:0;font-weight:400;font-size:12px}
ul{list-style:none}
em,i{font-style:normal}
svg{flex:none}
svg text{font-family:"Noto Sans",sans-serif}
.defs{position:absolute;width:0;height:0}
.mono{font-family:"Liberation Mono",monospace;font-size:10px}
.tri{width:0;height:0;flex:none;border:4px solid transparent;border-top-color:#1c3557;border-bottom:0}
.tri.up{border:4px solid transparent;border-bottom-color:#555;border-top:0}
.tri.left{border:5px solid transparent;border-right-color:#1c3557;border-left:0}
.tri.right{border:5px solid transparent;border-left-color:#111;border-right:0}
.screen{display:grid;grid-template-rows:1fr 7px;height:100vh}
.workspace{position:relative;overflow:hidden;min-height:0}

/* desktop shortcuts */
.icons{display:grid;grid-template-columns:repeat(3,76px);grid-auto-rows:86px;margin:-27px 0 0 5px}
.icons li{display:flex;flex-direction:column;align-items:center;padding:0 2px;text-align:center;color:#fff;font:12px/17px "Noto Sans","Noto Sans CJK SC",sans-serif;gap:3px}
.icons svg{width:32px;height:32px}

/* main application window */
.ems{position:absolute;inset:0 0 0 205px;display:grid;grid-template-rows:24px 1fr 32px 8px;background:#0b0d10;border-left:4px solid #2c3036;box-shadow:inset 1px 0 #8b9096;padding:0 7px 0 2px}
.titlebar{position:relative;display:flex;align-items:flex-end;background:linear-gradient(90deg,#0009,transparent 12%,transparent 60%,#000c 80%),linear-gradient(#000,#222 15%,#a2a2a2)}
.systab{width:56px;height:17px;background:linear-gradient(#f2825a,#ee5c2e);color:#fff;border-radius:2px 2px 0 0;margin-left:1px;position:relative;line-height:20px;overflow:hidden}
.ghosts{position:absolute;left:44px;top:0;display:flex;gap:38px;filter:blur(2px)}
.ghosts i{width:38px;height:22px;border-top:3px solid #c6d2da;border-bottom:9px solid #ccca}
.style-menu{margin-left:auto;color:#6e84a5;text-shadow:0 0 4px #999;margin-right:46px;line-height:10px}
.phone{width:20px;height:19px;margin:0 11px 3px 0}
.body{display:grid;grid-template-columns:56px 122px 1fr;min-height:0;background:#eef5fc}
.rail{background:linear-gradient(90deg,#c0d0e8,#b9cce4);border-right:1px solid #8fa7c6;display:flex;flex-direction:column}
.burger{height:41px;width:43px;margin-left:6px;border-bottom:1px solid #8299ba;display:flex;flex-direction:column;align-items:center;gap:4px;padding-top:9px}
.burger i{width:21px;height:3px;background:#1c3557}
.railbtn{height:47px;background:#d0dcee;border-bottom:1px solid #a9bcd8;display:grid;place-items:center}
.railbtn+.railbtn{height:43px}
.library{display:flex;flex-direction:column;background:#dfe7f0}
.library header{display:flex;align-items:center;height:38px;padding:0 9px 0 8px;background:#eff6fd;border-bottom:1px solid #8fa7c6;color:#1c3557}
.library header b{font-weight:700;flex:1}
.library header svg{margin-left:19px}
.library-list{flex:1;margin-right:5px;background:#fff;border:1px solid #92abd0;border-bottom:0;display:flex;flex-direction:column}
.acc{height:25px;display:flex;align-items:center;padding-left:2px;background:linear-gradient(#e9f1fb,#cfdff1);color:#1c3557;border-bottom:1px solid #8fa7c6}
.acc span{flex:1}
.acc.on{background:linear-gradient(#ffdda3,#ffbe62 45%,#ffb04a 55%,#ffe6a5)}
.tile{color:#1c3557;text-decoration:none;display:flex;flex-direction:column;align-items:center;padding-top:2px;height:58px}
.tile+.tile{gap:1px;padding-top:3px}

.document{display:grid;grid-template-rows:34px 86px 133px 6px 1fr;min-width:0;min-height:0;border-left:1px solid #7c93b2}
.doctabs{display:flex;align-items:center;justify-content:space-between;background:#bccee6;border-bottom:1px solid #a0b3cd;padding-right:5px;border-top:1px solid #8b9db5}
.doctabs>.tri{border-width:5px;border-bottom:0}
.doctab{width:128px;height:33px;display:flex;align-items:center;gap:8px;background:#f0f7fe;border-right:1px solid #8fa7c6;color:#1c3557;padding-left:6px}
.doctab b{font-size:13px}
.doctab span{margin-left:8px;font:16px/16px "Noto Sans",sans-serif}
.toolbar{display:flex;gap:14px;align-items:flex-start;padding:3px 0 0 7px;background:linear-gradient(#eff6fe,#dae5f1);border-bottom:1px solid #5f7088;color:#1c3557}
.tool{display:flex;flex-direction:column;align-items:center;flex:none;white-space:nowrap}
.tool svg{width:13px;height:13px;margin-bottom:4px}
.tool i{border:3px solid transparent;border-top-color:#1c3557;border-bottom:0;margin-top:20px}
.tool.wide{width:68px}
.tool.off{color:#9b9b9b}
.switch{padding-top:5px;text-align:center}
.switch input{position:absolute;opacity:0}
.switch em{width:66px;height:22px;border:1px solid #a9b3c2;border-radius:2px;background:linear-gradient(90deg,#c5ccd7 27px,#97a3b3 27px 28px,#eff5fc 28px);font:700 11px/20px "Liberation Mono",monospace;text-align:left;padding-left:35px;color:#707d90;margin-bottom:5px}
.switch span{line-height:17px}
.maininfo{position:relative;border:1px solid #8497b2;border-top:0;background:linear-gradient(#eef5fd 8px,#5f7088 8px 9px,#eef5fd 9px);padding:20px 3px 3px 1px}
.pill{border:1px solid #6b7f9c;border-top:0;border-radius:0 0 4px 4px;background:linear-gradient(#f6faff,#dfeaf6);color:#1f3b78;text-align:center;white-space:nowrap}
.maininfo .pill{position:absolute;left:50%;top:0;width:65px;height:20px;margin-left:-33px;line-height:14px}
.maingrid{display:grid;grid-template-columns:1fr 200px;gap:2px;background:#8497b2;height:110px}
.gridbox{background:#fff;border:1px solid #8aa2c4;border-right:0}
.grid{width:100%;table-layout:fixed;border-collapse:separate;border-spacing:0;white-space:nowrap}
.grid th,.grid td{padding:0;overflow:hidden}
.grid th{font:12px/16px "Noto Sans","Noto Sans CJK SC",sans-serif;background:linear-gradient(#f4f8fd,#e4ecf6);border-right:1px solid #8aa2c4;border-bottom:1px solid #8aa2c4}
.grid th.tail{background:#d3dff0}
.corner::after{content:"";float:right;margin:11px 2px 0 0;border:5px solid transparent;border-right-color:#427bd2;border-bottom-color:#427bd2}
.g1 th,.g3 th{height:32px}
.g2 th{height:21px}
.g1 td{background:#b1d4f8;height:22px;border-right:1px solid #c0dcf8;padding-left:1px;border-bottom:1px solid #dbeafa}
.g1 td.mark{background:#c5cad2;border-color:#9aa8bb}
.g1 td .tri,.g3 td .tri{display:block;margin-left:2px;border-top-width:4px;border-bottom-width:4px;border-left-width:4px}
.w33{width:33px}.w34{width:34px}.w35{width:35px}.w40{width:40px}.w63{width:63px}.w64{width:64px}.w70{width:70px}.w88{width:88px}.w94{width:94px}.w100{width:100px}.w109{width:109px}.w112{width:112px}.w120{width:120px}.w130{width:130px}
.hsplit{display:flex;align-items:center;justify-content:center;gap:10px;background:linear-gradient(#8492a8,#c0cbd8,#8492a8)}
.hsplit u{width:34px;border-top:2px dotted #3b5786}

.lower{display:grid;grid-template-columns:198px 350px 5px 1fr;min-height:0;background:#e9f2fb}
.hintpane{background:linear-gradient(#eef5fd 10px,#7186a4 10px 11px,#eef5fd 11px);padding:22px 0 0 3px}
.hintbox{height:400px;display:flex;border:1px solid #6f8fc4;background:#f0f1f2}
.hintbox p{width:130px;padding:8px 0 0 5px;color:#1c3557}
.hintbox svg{margin:7px 0 0 4px}
.vtab{writing-mode:vertical-rl;font-size:12px;width:24px;padding:14px 4px 0 2px;background:#c6d9f5}
.treepane{position:relative;display:flex;min-height:0;background:linear-gradient(#eef5fd 9px,#7186a4 9px 10px,#eef5fd 10px);padding:21px 4px 4px 5px;border-right:1px solid #8497b2;border-bottom:1px solid #8497b2}
.treepane .pill{position:absolute;left:0;top:0;width:150px;height:20px;line-height:15px}
.treebox{flex:1;display:grid;grid-template-columns:1fr 16px;grid-template-rows:1fr 16px;border:1px solid #93a9c9;background:#fff;min-height:0;min-width:0}
.treeview{overflow:hidden;min-height:0;position:relative;background:linear-gradient(90deg,transparent 154px,#ddd 154px 155px,transparent 155px 209px,#ddd 209px 210px,transparent 210px 284px,#ddd 284px 285px,transparent 285px)}
.tree{table-layout:fixed;width:100%;border-spacing:0;white-space:nowrap}
.c1{width:155px}.c2{width:55px}.c3{width:75px}
.tree th{height:18px;text-align:left;font-weight:400;padding:0 0 0 7px;background:linear-gradient(#f2f7fd,#dce7f4);border-right:1px solid #93a9c9;border-bottom:1px solid #93a9c9;overflow:hidden}
.tree th:nth-child(2){padding-left:4px}
.tree th:first-child{padding-left:0}
.tree td{padding:0 0 0 7px;height:19px;overflow:hidden}
.tree td:first-child{padding:0}
.tree .root td{height:22px;padding-top:2px}
.tree td div{display:flex;align-items:center;height:19px;padding-left:20px}
.tree .root div{padding-left:4px}
.tree td svg{width:16px;height:16px;margin-right:6px}
.tree .root svg{margin-left:8px;margin-right:6px}
.l1 svg{margin-left:8px}
.tog{width:9px;height:9px;border:1px solid #888;background:linear-gradient(transparent 3px,#333 3px 4px,transparent 4px),#fff}
.l1 div,.l2 div{background:repeating-linear-gradient(#777 0 1px,transparent 1px 2px) 24px 0/1px 100% no-repeat}
.twig{width:10px;height:19px;margin:0 3px 0 20px;background:repeating-linear-gradient(#777 0 1px,transparent 1px 2px) 0 0/1px 100% no-repeat,repeating-linear-gradient(90deg,#777 0 1px,transparent 1px 2px) 0 10px/100% 1px no-repeat}
.last .twig{background-size:1px 10px,100% 1px}
.red{color:#d41111}
.sel td{background:linear-gradient(#fafafa,#e7e7e7)}
.sel td:first-child{background:linear-gradient(90deg,#fff 52px,transparent 52px),linear-gradient(#fafafa,#e7e7e7)}
.vscroll{display:flex;flex-direction:column;align-items:center;background:#f5f5f5;padding:7px 0}
.vscroll .tri{border-top-color:#555}
.vscroll .thumb{width:15px;height:313px;margin:7px 0 auto;border:1px solid #8e939a;border-radius:1px;background:repeating-linear-gradient(#777 0 1px,transparent 1px 3px) 50% 50%/8px 7px no-repeat,linear-gradient(90deg,#f7f7f7,#d8dadd)}
.hscroll{display:flex;align-items:center;justify-content:space-between;background:#f5f5f5;padding-right:7px}
.hscroll .tri{border-left-color:#555}
.hscroll .thumb{width:145px;height:15px;border:1px solid #8e939a;background:repeating-linear-gradient(90deg,#777 0 1px,transparent 1px 3px) 55% 50%/8px 8px no-repeat,linear-gradient(#f7f9fc,#d8e0ea)}
.vsplit{display:flex;flex-direction:column;align-items:center;padding-top:309px;gap:6px;background:linear-gradient(90deg,#8796ab,#c6d0dc)}
.vsplit u{height:34px;border-left:2px dotted #3b5786}
.vsplit .tri{border-width:4px;border-right-width:5px}
.vsplit .tri.left{border-left:0}.vsplit .tri.right{border-right:0}
.params{display:flex;flex-direction:column;min-width:0;border-left:1px solid #5a76a5}
.tabs{display:flex;align-items:center;height:25px;background:linear-gradient(#bdd1e8,#dfeaf6);border-bottom:1px solid #a9bcd6}
.tabs button{height:25px;padding:0 7px}
.tabs button.on{width:68px;padding:0;background:#2966bd;color:#fff;font-weight:700;font-size:13px;position:relative}
.tabs .on::after{content:"";position:absolute;left:29px;bottom:0;border:5px solid transparent;border-bottom-color:#fff;border-top:0}
.tabs .tri{margin:0 5px 0 auto;border-width:5px;border-bottom:0;border-top-color:#000}
.panes{flex:1;display:grid;grid-template-columns:376px 6px 1fr;min-height:0}
.pane{background:#fff;border:1px solid #4d6b9a;border-top:0;border-left:0;display:flex;flex-direction:column;min-width:0}
.p1{padding-left:1px}
.p2{border-left:1px solid #4d6b9a}
.vsplit.thin{padding-top:296px}
.subtab{height:28px;display:flex;align-items:flex-start;padding:3px 0 0 5px;background:linear-gradient(transparent 22px,#4d74b5 22px 23px,#8bafe4 23px),linear-gradient(#c8dcf8,#f8fbff)}
.subtab svg{width:32px;height:20px}
.subtab b{height:20px;width:63px;font-size:13px;line-height:17px;background:#c6daf7;border-top:1px solid #4a6fae;border-right:1px solid #4a6fae;border-radius:0 3px 0 0}
.g3{border-left:1px solid #8aa2c4;border-top:1px solid #8aa2c4}
.g3 td{height:22px;border-right:1px solid #c6d5ea;border-bottom:1px solid #c6d5ea;background:#eaf2fc;padding-left:1px}
.g3 tr:nth-child(even) td{background:#f2f2f2}
.g3 td:nth-child(4){padding-left:3px}
.g3 td:nth-child(5),.g3 tr:nth-child(odd) td:nth-child(3),.g3 tr:nth-child(even) td:nth-child(5){background:#fff}
.g3 tbody tr td:nth-child(1),.g3 tbody tr:nth-child(even) td:nth-child(1){background:linear-gradient(90deg,#dee9f6,#cfdeef);border-color:#8fa7c6}
.key td:nth-child(2){color:#b61c7c}
.notes{flex:1;display:grid;grid-template-columns:198px 1fr;background:#efefef}
.notes>div{display:flex;flex-direction:column;border-right:1px solid #7492bd}
.notes h3{height:26px;padding:5px 3px;color:#27447c;background:linear-gradient(#f3f8fe,#dce8f5);border-bottom:1px solid #8aa2c4}
.notebody{flex:1;display:flex;flex-direction:column;justify-content:space-between;align-items:flex-end;padding:8px 4px;background:linear-gradient(90deg,transparent calc(100% - 16px),#ddd calc(100% - 16px) calc(100% - 15px),#f3f3f3 0)}
.notebody .tri{border-width:3px;border-bottom-width:0;border-top-color:#888}
.notebody .tri.up{border-width:0 3px 3px;border-color:transparent transparent #888}
.status{display:flex;align-items:center;background:linear-gradient(#f0f6fd,#dbe5f1);border-top:1px solid #6a80a4;color:#1c3557;padding-left:598px;white-space:nowrap;overflow:hidden;min-width:0}
.ver{flex:1}
.count,.now{display:flex;align-items:center;gap:8px;width:188px;flex:none}
.now{width:174px;gap:10px}
.count em{color:#ee1111;margin-left:-12px}

/* word processor window */
.word{position:absolute;left:0;top:345px;bottom:0;width:614px;background:#b7d3f3;border:1px solid #222;border-left:0;border-bottom:0;border-radius:0 6px 0 0;box-shadow:3px 2px 10px #0009;display:flex;flex-direction:column}
.wtitle{position:relative;height:28px;display:flex;align-items:center;background:linear-gradient(90deg,#2f3338 0 198px,#aecdf0 222px,#c9e0fa);border-radius:0 5px 0 0;border-top:1px solid #cfe0f2}
.orb{position:absolute;left:2px;top:5px;width:36px;height:36px;border-radius:50%;background:radial-gradient(#fff,#cdd5df 60%,#8d98a8);border:1px solid #667;padding:6px;z-index:2}
.qat{display:flex;align-items:center;gap:8px;margin-left:36px;width:160px;height:26px;padding-left:14px;background:linear-gradient(#84888d,#4c5055);border-radius:0 13px 13px 0}
.qat svg{width:15px;height:15px}
.qat .tri{border-top-color:#ddd;margin:0 -4px;border-width:3px;border-bottom:0}
.qmore{border-top-color:#fff;margin-left:8px}
.wtitle h1{font:12px/16px "Noto Sans","Noto Sans CJK SC",sans-serif;margin-left:14px;white-space:nowrap}
.winbtns{position:absolute;right:6px;top:-1px;display:flex;height:19px;border:1px solid #3d4650;border-radius:0 0 4px 4px;overflow:hidden}
.winbtns button{width:28px;display:grid;place-items:center;background:linear-gradient(#eef5fc,#b3c8de 50%,#d1e2f3);border-right:1px solid #55606c}
.winbtns .close{width:47px;border:0;background:linear-gradient(#e9a08c,#cc3b20 50%,#dc7355)}
.min{width:12px;height:4px;border:1px solid #444;background:#fff}
.max{width:12px;height:10px;border:1px solid #444;background:#fff;box-shadow:inset 0 0 0 2px #fff,inset 0 0 0 3px #444}
.wbody{flex:1;display:flex;flex-direction:column;margin:0 7px 0 2px;border-top:1px solid #7c97bb;border-right:1px solid #7c97bb;min-height:0;background:#bfdbff;font-family:"Noto Sans","Noto Sans CJK SC",sans-serif}
.wtabs{display:flex;height:27px;padding:1px 4px 0 45px;color:#1e4a8c}
.wtabs button{padding:0 12px;margin-right:5px;border-radius:3px 3px 0 0}
.wtabs .on{background:#ebf3fd;border:1px solid #8fb3e2;border-bottom:0;padding:0 11px}
.help{margin:4px 0 0 auto;width:14px;height:14px;border-radius:50%;background:#2e63c2;color:#fff;font-weight:700;line-height:14px;text-align:center}
.ribbon{display:flex;gap:3px;padding:2px 0 3px;height:106px;background:linear-gradient(#dde8f5,#c7d8ed 20px,#dff0fb);border:1px solid #8fb3e2;border-left:0;border-radius:0 4px 4px 0}
.grp{display:flex;flex-direction:column;border:1px solid #9dbce3;border-radius:3px;background:linear-gradient(#dde8f5,#c9d9ee 20px,#d5e4f4);color:#1e4a8c;overflow:hidden;flex:none}
.grp h4{height:19px;background:#c1d9f1;color:#4369a8;display:flex;justify-content:center;align-items:center;position:relative}
.clip h4{padding-right:14px}
.grp h4 svg{position:absolute;right:4px;top:4px}
.grpbody{flex:1;min-height:0}
.clip{width:72px}.font{width:207px}.para{width:164px}.tall{width:42px}
.clip .grpbody{display:flex;padding:3px 0 0 10px;gap:9px}
.paste{display:flex;flex-direction:column;align-items:center;gap:4px;width:28px}
.minis{display:flex;flex-direction:column;gap:7px;padding-top:1px}
.minis svg,.rb svg{width:15px;height:15px}
.rows{display:flex;flex-direction:column;gap:4px;padding:3px 3px 0}
.row{display:flex;gap:3px;height:22px}
.grp .tri{border-width:3px;border-bottom:0;border-top-color:#4a6da8}
select{appearance:none;height:24px;border:1px solid #b3cbe8;background:linear-gradient(45deg,transparent 50%,#4a6da8 50%) right 7px top 10px/4px 4px no-repeat,linear-gradient(-45deg,transparent 50%,#4a6da8 50%) right 3px top 10px/4px 4px no-repeat,#eaf2fb;color:#111;padding:0 2px;border-radius:0}
.family{width:91px;margin-right:-3px}.size{width:54px}
.bar{display:flex;border:1px solid #94b1d8;border-radius:2px;background:#d3e2f4}
.rb{min-width:20px;flex:1;display:flex;align-items:center;justify-content:center;gap:2px;color:#1d2430;border-right:1px solid #b3c8e4;font-weight:700}
.script{gap:0}
.bar .rb:last-child{border-right:0}
.rb.lone{flex:none;width:24px;border:1px solid #94b1d8;border-radius:2px;background:#d3e2f4}
.rb.w32{width:31px}
.rb sub,.rb sup{font-size:7px;line-height:7px;color:#3154a5}
.rb sub{align-self:flex-end;margin-bottom:3px}
.rb sup{align-self:flex-start;margin-top:3px}
.serif{font-family:"Liberation Serif",serif;font-size:15px}
.boxed{width:16px;height:16px;border:1px solid #445;line-height:14px}
.it{font-style:italic}.ul{text-decoration:underline}
.st{text-decoration:line-through;font-size:12px}
.ruby{flex-direction:column;gap:0;color:#2b4db0;line-height:12px;font-weight:400}
.ruby small{font-size:8px;line-height:8px;color:#111;font-weight:700}
.f2{width:154px}.f3{width:97px}.p3{width:99px}.p5{width:117px}.p2b{width:67px}.grow{flex:1}
.hl{font-size:10px;box-shadow:inset 0 -3px #ff0}
.fc{box-shadow:inset 0 -3px #f00;color:#234a98}
.aa{font-size:13px}.sm{font-size:12px}
.shade{width:15px;line-height:16px;background:#b5b3ac}
.ring{width:16px;height:16px;border:1px solid #334;border-radius:50%;font-weight:400;font-size:11px;line-height:14px}
.hot{background:linear-gradient(#ffd18a,#ffb144 50%,#ffe69b)}
.sort b{font-size:9px;line-height:9px;color:#2b4db0}.sort b i{color:#a33}
.tall{background:linear-gradient(#dde8f5,#c7d8ed 20px,#ddf0fb)}
.tall button{display:flex;flex-direction:column;align-items:center;gap:4px;padding-top:4px}
.big{width:31px;height:30px;border:1px solid #aac4e6;border-radius:3px;background:#dfeaf7;display:grid;place-items:center}
.big svg{width:18px;height:18px}
.tall .tri,.paste .tri{margin-top:3px}
.docarea{flex:1;display:flex;min-height:0;margin-top:6px}
.pages{flex:1;display:flex;flex-direction:column;min-width:0}
.page{flex:1;background:#fff;padding:7px 0 0 24px;position:relative;min-height:0;overflow:hidden;font:14px/21px "Liberation Serif","Noto Sans CJK SC",serif}
.page p{font-size:14px;height:21px;white-space:nowrap}
.page p svg{margin-left:4px}
.page .blank svg{margin-left:0}
.page .blank{margin-top:9px}
.figure{display:flex;align-items:flex-end;gap:8px;margin-left:56px}
.pcb{width:416px;table-layout:fixed;border-collapse:collapse;font:15px/19px "Liberation Sans",sans-serif;white-space:pre;color:#222}
.pcb .k{width:130px}
.pcb th,.pcb td{border:2px solid #222;padding:0 0 0 2px;text-align:left;height:21px;line-height:17px}
.pcb th{font-size:14px}
.pcb .h th{height:40px;line-height:19px}
.pcb .h2 th{height:27px}
.pcb .end td{height:22px}
.pcb .h .mid{text-align:center}
.ret{margin-bottom:-6px}
.sec{font-weight:700}
.sec span{display:inline-block;width:28px}
.item{padding-left:28px}
.item span{display:inline-block;width:24px}
.item mark{display:inline-block;background:#a9cdf1;color:#132d55;height:21px}
.crop{position:absolute;left:0;bottom:19px;width:22px;height:24px;border:1px solid #999;border-left:0;border-bottom:0}
.pagegap{height:14px;background:linear-gradient(#2e4f7d,#5c82b6)}
.nextpage{height:11px;background:#fff}
.wscroll{width:15px;display:flex;flex-direction:column}
.ruler{height:19px;background:#bfd7f3;display:grid;place-items:center;border-top:2px solid #445a7a}
.track{flex:1;background:#7d9dc9;display:flex;flex-direction:column;align-items:center;padding-top:6px}
.wscroll .thumb{width:13px;height:100px;margin-top:112px;border:1px solid #5273a5;background:repeating-linear-gradient(#667c9c 0 1px,transparent 1px 3px) 50% 50%/8px 8px no-repeat,linear-gradient(90deg,#eef3fb,#c2d3ea)}
.marks{position:absolute;left:0;top:0;pointer-events:none}
.ball{position:absolute;right:-28px;bottom:51px;width:46px;height:46px;border-radius:50%;border:3px solid #e6e6e6;background:#f5831f;color:#fff;font:700 12px/40px "Noto Sans",sans-serif;padding-left:1px}
.ime{position:absolute;right:2px;bottom:3px;height:24px;width:163px;background:#fbfcfe;border:1px solid #ccd;display:flex;align-items:center;justify-content:space-between;padding-right:4px;color:#4b5267;font:700 14px/20px "Noto Sans","Noto Sans CJK SC",sans-serif}
.ime svg{width:16px;height:16px}
.sogou{width:26px;height:26px;margin-top:-4px;border-radius:4px;background:#36b31c;color:#fff;font-size:22px;line-height:26px;text-align:center;transform:rotate(-8deg)}
.taskbar{display:flex;gap:3px;background:#06080a;border-top:1px solid #333;position:relative}
.taskbar i{width:88px;flex:none;background:linear-gradient(90deg,#999,#444);border-top:1px solid #aaa;border-radius:2px 2px 0 0;position:relative}
.taskbar .lt{background:linear-gradient(90deg,#c8d6e4,#8fa6bf)}
.taskbar i:first-child{width:78px}
.taskbar .g::after,.taskbar .c::after,.taskbar .r::after,.taskbar .b::after,.taskbar .gr::after{content:"";position:absolute;left:9px;top:4px;width:28px;height:3px;background:#e9edf2}
.taskbar .c::after{background:#2f9ee2}.taskbar .r::after{background:#c33}.taskbar .b::after{background:#2353c0}.taskbar .gr::after{background:#1d9a52}
```
